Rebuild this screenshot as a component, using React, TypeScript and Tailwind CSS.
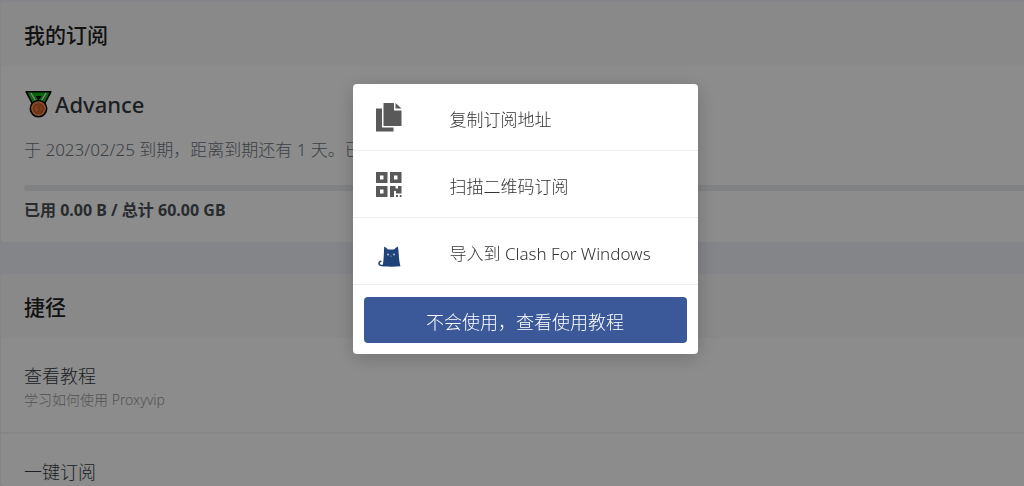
import type { ReactNode } from "react";

const FONT = "font-['Noto_Sans','Noto_Sans_CJK_SC',sans-serif]";

function CopyIcon() {
    return (
        <svg viewBox="0 0 26 29" className="w-[26px] h-[29px]" fill="#595959" aria-hidden="true">
            <path d="M0 5.5H6V24.5H17.5V28.5H0Z" />
            <path d="M7.5 0H18V7.5H25.5V23H7.5Z" />
            <path d="M19.5 0L25.5 5.5H19.5Z" />
        </svg>
    );
}

function QrIcon() {
    return (
        <svg viewBox="0 -1 26 26" className="w-[26px] h-[26px]" fill="#595959" fillRule="evenodd" aria-hidden="true">
            <path d="M0 0H11.5V11H0ZM4 3.5V7.5H7.5V3.5Z" />
            <path d="M14 0H25.5V11H14ZM18 3.5V7.5H21.5V3.5Z" />
            <path d="M0 14H11.5V25H0ZM4 17.5V21.5H7.5V17.5Z" />
            <path d="M14 14H19.5V16.5H22V14H25.5V21.5H20V19H18V25H14Z" />
            <path d="M20 23H22V25H20ZM23.8 23H25.5V25H23.8Z" />
        </svg>
    );
}

function CatIcon() {
    return (
        <svg viewBox="0 -12 26 38" className="w-[26px] h-[38px]" aria-hidden="true">
            <path
                d="M8.2 2.5C9.8 3.4 11.2 4.8 12.2 5.6H17.8C18.8 4.8 20.2 3.4 21.8 2.5C22.4 5 22.6 8 22.8 11C23 15 23.6 19 24.5 22.3C19 22.9 13 22.9 6.6 22.3C7.8 17 7.8 9 8.2 2.5Z"
                fill="#1f4379"
            />
            <path d="M9 21.5H5.8C2.4 21.5 2 17.5 5.4 17.3" fill="none" stroke="#1f4379" strokeWidth="1.6" />
            <circle cx="12" cy="10.5" r="0.9" fill="#c8d6e8" />
            <circle cx="18" cy="10.5" r="0.9" fill="#c8d6e8" />
            <circle cx="15" cy="12" r="0.5" fill="#c8d6e8" />
        </svg>
    );
}

function MedalIcon() {
    return (
        <svg viewBox="-1 -1 28 28" className="w-7 h-7" aria-hidden="true">
            <path
                d="M1.2 0.8H25.8L19.5 13H7.5Z"
                fill="#14b414"
                stroke="#000"
                strokeWidth="1.6"
                strokeLinejoin="round"
            />
            <path d="M5.8 1.8L10.8 10M21.2 1.8L16.2 10" stroke="#e4f4e4" strokeWidth="1.3" />
            <path d="M10.5 5H16.5L13.5 9.5Z" fill="#000" />
            <circle cx="13.5" cy="17.6" r="8.2" fill="#f58b4c" stroke="#000" strokeWidth="1.5" />
            <circle cx="13.5" cy="17.6" r="4.8" fill="#e87838" stroke="#b0521c" strokeWidth="1.3" />
            <path d="M12 15.2H15V20.2H12M12.5 17.7H15" fill="none" stroke="#b0521c" strokeWidth="1.1" />
        </svg>
    );
}

interface Action {
    label: string;
    icon: ReactNode;
}

const actions: Action[] = [
    { label: "复制订阅地址", icon: <CopyIcon /> },
    { label: "扫描二维码订阅", icon: <QrIcon /> },
    { label: "导入到 Clash For Windows", icon: <CatIcon /> },
];

function Card({ title, children }: { title: string; children: ReactNode }) {
    return (
        <section className="rounded-l bg-white overflow-hidden">
            <h2 className="bg-[#fafafa] px-[23px] pt-[17px] pb-[15px] text-[21px] leading-8 font-medium text-[#222]">
                {title}
            </h2>
            {children}
        </section>
    );
}

function SubscribeDialog() {
    return (
        <div className="fixed inset-0 bg-black/45 flex justify-center items-start pt-[84px] pl-[26px]">
            <div
                role="dialog"
                aria-modal="true"
                aria-label="一键订阅"
                className="w-[345px] rounded bg-white shadow-[0_4px_20px_rgba(0,0,0,0.2)]"
            >
                {actions.map((action) => (
                    <button
                        key={action.label}
                        type="button"
                        className="flex w-full h-[67px] items-center border-b border-[#eee] pl-[23px] text-left text-[17px] leading-6 font-light text-[#333] cursor-pointer"
                    >
                        <span className="w-[74px]">{action.icon}</span>
                        <span className="pt-[6px]">{action.label}</span>
                    </button>
                ))}
                <div className="px-[11px] pt-3 pb-[11px]">
                    <a
                        href="#tutorial"
                        className="block rounded bg-[#3b5998] pt-[11px] pb-[7px] text-center text-[18px] leading-7 font-light text-white"
                    >
                        不会使用，查看使用教程
                    </a>
                </div>
            </div>
        </div>
    );
}

export default function App() {
    return (
        <div className={`${FONT} h-screen overflow-hidden bg-[#f0f2f9] pl-px pt-[2px]`}>
            <main className="flex flex-col gap-8">
                <Card title="我的订阅">
                    <div className="pl-[23px] pt-5 pb-[18px]">
                        <h3 className="flex items-center gap-[3px] text-[22px] leading-9 font-medium text-[#343a40]">
                            <MedalIcon />
                            Advance
                        </h3>
                        <p className="mt-[14px] text-[17px] leading-7 font-light text-[#6c757d]">
                            于 2023/02/25 到期，距离到期还有 1 天。已用流量将在每月重置。
                        </p>
                        <div
                            role="progressbar"
                            aria-label="已用流量"
                            aria-valuenow={0}
                            className="mt-[21px] h-[6px] rounded-l-full bg-[#e9ecef]"
                        />
                        <p className="mt-[5px] text-[16px] leading-7 font-bold text-[#495057]">已用 0.00 B / 总计 60.00 GB</p>
                    </div>
                </Card>

                <Card title="捷径">
                    <a href="#tutorial" className="block border-b-2 border-[#f5f5f5] px-[23px] pt-6 pb-[22px]">
                        <span className="block text-[18px] leading-7 font-light text-[#343a40]">查看教程</span>
                        <span className="block text-[14px] leading-5 font-light text-[#999]">学习如何使用 Proxyvip</span>
                    </a>
                    <a href="#subscribe" className="block px-[23px] pt-6">
                        <span className="block text-[18px] leading-7 font-light text-[#343a40]">一键订阅</span>
                    </a>
                </Card>
            </main>
            <SubscribeDialog />
        </div>
    );
}
